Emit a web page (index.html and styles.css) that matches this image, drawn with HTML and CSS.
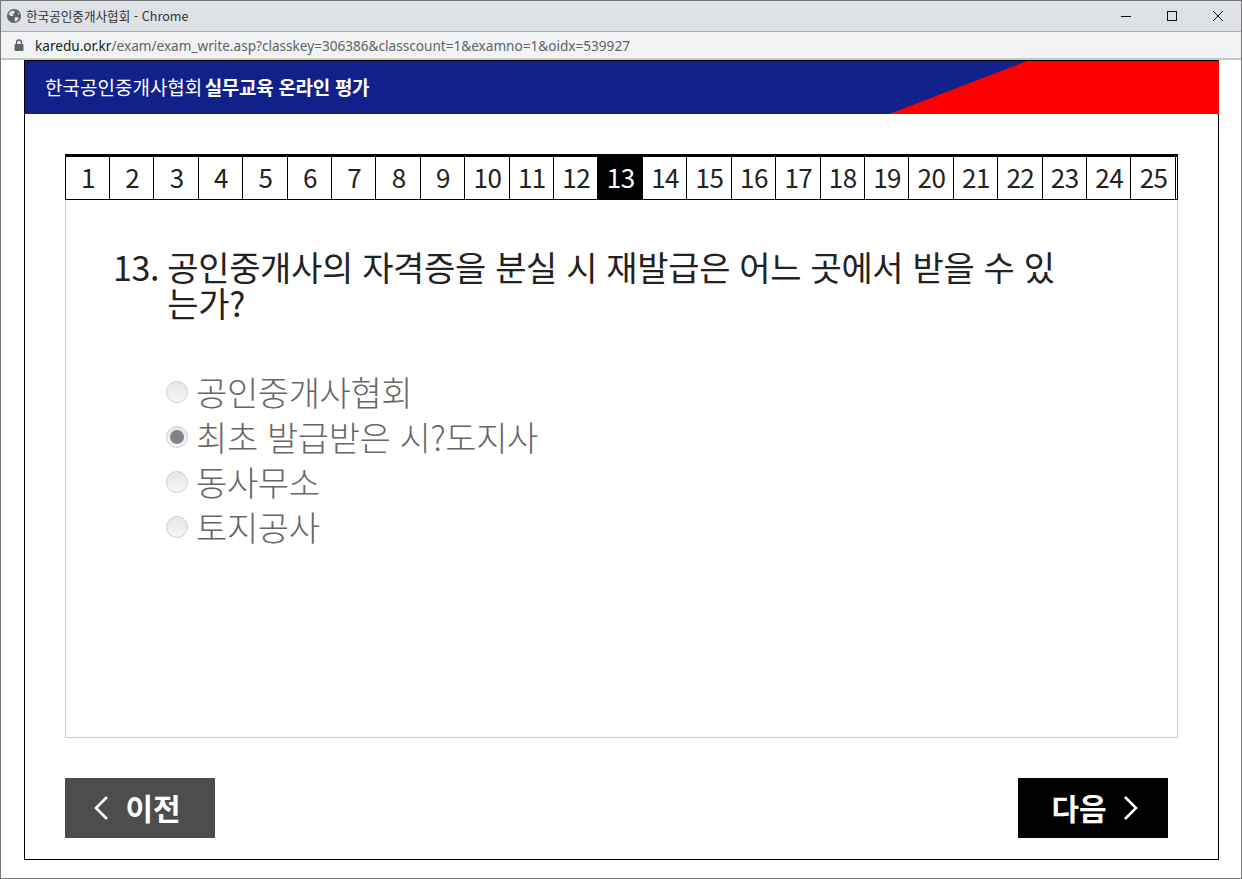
FILE: index.html
```html
<!DOCTYPE html>
<html lang="ko">
<head>
	<meta charset="UTF-8">
	<meta name="viewport" content="width=device-width, initial-scale=1.0">
	<title>한국공인중개사협회 - Chrome</title>

	<link rel="stylesheet" href="styles.css">

</head>
<body>

	<div class="window">

		<div class="titlebar">
			<svg class="globe" width="14" height="14" viewBox="0 0 14 14">
				<circle cx="7" cy="7" r="7" fill="#5f6368"/>
				<path d="M3 2.5 L7 1.5 L8 3.5 L6 5 L6.5 7 L3.5 7 L1.5 5 Z M8 8 L11 8 L11.5 10 L9 12.5 L7.5 12 Z M10.5 3 L12.5 5 L11 5.5 Z" fill="#dee1e6"/>
			</svg>
			<span class="title-text">한국공인중개사협회 - Chrome</span>
			<div class="win-controls">
				<svg width="12" height="12" viewBox="0 0 12 12"><path d="M1 6.5 H11" stroke="#111" fill="none"/></svg>
				<svg width="12" height="12" viewBox="0 0 12 12"><rect x="1.5" y="1.5" width="9" height="9" stroke="#111" fill="none"/></svg>
				<svg width="12" height="12" viewBox="0 0 12 12"><path d="M1 1 L11 11 M11 1 L1 11" stroke="#111" fill="none"/></svg>
			</div>
		</div>

		<div class="addressbar">
			<svg class="lock" width="10" height="12" viewBox="0 0 10 12">
				<path d="M2.5 5 V3.5 a2.5 2.5 0 0 1 5 0 V5" stroke="#5f6368" stroke-width="1.3" fill="none"/>
				<rect x="0.5" y="5" width="9" height="7" rx="1" fill="#5f6368"/>
			</svg>
			<span class="url"><b>karedu.or.kr</b>/exam/exam_write.asp?classkey=306386&amp;classcount=1&amp;examno=1&amp;oidx=539927</span>
		</div>

		<div class="frame">

			<div class="banner">
				<h1 class="banner-title">한국공인중개사협회 <strong>실무교육 온라인 평가</strong></h1>
				<svg class="banner-red" width="330" height="53" viewBox="0 0 330 53">
					<polygon points="138,0 330,0 330,53 0,53" fill="#ff0000"/>
				</svg>
			</div>

			<div class="exam">

				<div class="tabs">
					<a class="tab">1</a>
					<a class="tab">2</a>
					<a class="tab">3</a>
					<a class="tab">4</a>
					<a class="tab">5</a>
					<a class="tab">6</a>
					<a class="tab">7</a>
					<a class="tab">8</a>
					<a class="tab">9</a>
					<a class="tab">10</a>
					<a class="tab">11</a>
					<a class="tab">12</a>
					<a class="tab tab-active">13</a>
					<a class="tab">14</a>
					<a class="tab">15</a>
					<a class="tab">16</a>
					<a class="tab">17</a>
					<a class="tab">18</a>
					<a class="tab">19</a>
					<a class="tab">20</a>
					<a class="tab">21</a>
					<a class="tab">22</a>
					<a class="tab">23</a>
					<a class="tab">24</a>
					<a class="tab">25</a>
				</div>

				<div class="question-box">
					<div class="question">
						<span class="question-no">13.</span>
						<span class="question-text">공인중개사의 자격증을 분실 시 재발급은 어느 곳에서 받을 수 있는가?</span>
					</div>
					<div class="answers">
						<label class="answer"><input type="radio" name="a13" disabled><span>공인중개사협회</span></label>
						<label class="answer"><input type="radio" name="a13" disabled checked><span>최초 발급받은 시?도지사</span></label>
						<label class="answer"><input type="radio" name="a13" disabled><span>동사무소</span></label>
						<label class="answer"><input type="radio" name="a13" disabled><span>토지공사</span></label>
					</div>
				</div>

				<div class="nav">
					<button class="nav-btn nav-prev" type="button">
						<svg width="16" height="26" viewBox="0 0 16 26"><path d="M14 2 L3 13 L14 24" stroke="#fff" stroke-width="2.6" fill="none"/></svg>
						<span>이전</span>
					</button>
					<button class="nav-btn nav-next" type="button">
						<span>다음</span>
						<svg width="16" height="26" viewBox="0 0 16 26"><path d="M2 2 L13 13 L2 24" stroke="#fff" stroke-width="2.6" fill="none"/></svg>
					</button>
				</div>

			</div>
		</div>

	</div>

</body>
</html>
```

FILE: styles.css
```css
* {
	box-sizing: border-box;
}
html, body {
	margin: 0;
	padding: 0;
	height: 100%;
	overflow: hidden;
}
body {
	font-family: "Noto Sans CJK KR", "Noto Sans", sans-serif;
	background-color: #ffffff;
}
.window {
	display: flex;
	flex-direction: column;
	height: 879px;
	border: 1px solid #777777;
	background-color: #ffffff;
}

.titlebar {
	display: flex;
	align-items: center;
	flex: none;
	height: 31px;
	padding-left: 6px;
	background-color: #dee1e6;
	border-bottom: 1px solid #a6a8ab;
}
.title-text {
	margin-left: 5px;
	padding-bottom: 2px;
	font-size: 12.6px;
	color: #333333;
}
.win-controls {
	display: flex;
	gap: 34px;
	margin-left: auto;
	padding-right: 17px;
}

.addressbar {
	display: flex;
	align-items: center;
	flex: none;
	height: 28px;
	padding-left: 13px;
	background-color: #f1f3f4;
	border-bottom: 2px solid #c4c6c8;
}
.url {
	margin-left: 11px;
	font-family: "Noto Sans", sans-serif;
	font-size: 13.6px;
	color: #5f6368;
}
.url b {
	font-weight: 400;
	color: #202124;
}

.frame {
	display: flex;
	flex-direction: column;
	flex: none;
	width: 1195px;
	height: 800px;
	margin-left: 23px;
	border: 1px solid #000000;
}

.banner {
	position: relative;
	display: flex;
	align-items: center;
	flex: none;
	height: 53px;
	padding: 0 0 3px 20px;
	background-color: #10218b;
}
.banner-title {
	margin: 0;
	font-size: 19px;
	font-weight: 400;
	color: #ffffff;
}
.banner-title strong {
	margin-left: -3px;
	font-weight: 700;
	letter-spacing: -0.3px;
}
.banner-red {
	position: absolute;
	top: 0;
	right: -1px;
}

.exam {
	display: flex;
	flex-direction: column;
	padding: 40px 40px 0;
}

.tabs {
	display: grid;
	grid-template-columns: 44.02px repeat(24, 44.42px);
	height: 46px;
	border-top: 3px solid #000000;
	border-left: 1px solid #000000;
	border-right: 1px solid #000000;
	border-bottom: 1px solid #000000;
}
.tab {
	display: flex;
	align-items: center;
	justify-content: center;
	padding: 0 0 3px 1px;
	border-right: 1px solid #000000;
	font-size: 26px;
	letter-spacing: -0.5px;
	color: #222222;
}
.tab-active {
	background-color: #000000;
	color: #ffffff;
}

.question-box {
	height: 538px;
	padding: 49px 120px 0 47px;
	border: 1px solid #cccccc;
	border-top: none;
}
.question {
	display: flex;
	gap: 8px;
	font-size: 34px;
	line-height: 36px;
	letter-spacing: -0.33px;
	color: #222222;
}
.question-no {
	flex: none;
}
.answers {
	display: flex;
	flex-direction: column;
	margin-top: 48px;
	padding-left: 53px;
}
.answer {
	display: flex;
	align-items: center;
	gap: 8px;
	height: 45px;
	font-size: 34px;
	font-weight: 300;
	letter-spacing: -0.4px;
	color: #666666;
}
.answer input {
	appearance: none;
	flex: none;
	display: flex;
	align-items: center;
	justify-content: center;
	width: 22px;
	height: 22px;
	margin: 0;
	border: 1px solid #cfcfcf;
	border-radius: 50%;
	background: linear-gradient(#e6e6e6, #f7f7f7);
}
.answer input:checked::after {
	content: "";
	width: 14px;
	height: 14px;
	border-radius: 50%;
	background-color: #7f848b;
}

.nav {
	display: flex;
	justify-content: space-between;
	padding: 40px 10px 0 0;
}
.nav-btn {
	display: flex;
	align-items: center;
	justify-content: center;
	gap: 16px;
	width: 150px;
	height: 60px;
	border: none;
	font-family: inherit;
	font-size: 30px;
	font-weight: 700;
	color: #ffffff;
}
.nav-btn span {
	padding-bottom: 3px;
}
.nav-prev {
	background-color: #4d4d4d;
	padding: 0 6px 0 0;
}
.nav-next {
	background-color: #000000;
	padding: 0 0 0 4px;
}
```
